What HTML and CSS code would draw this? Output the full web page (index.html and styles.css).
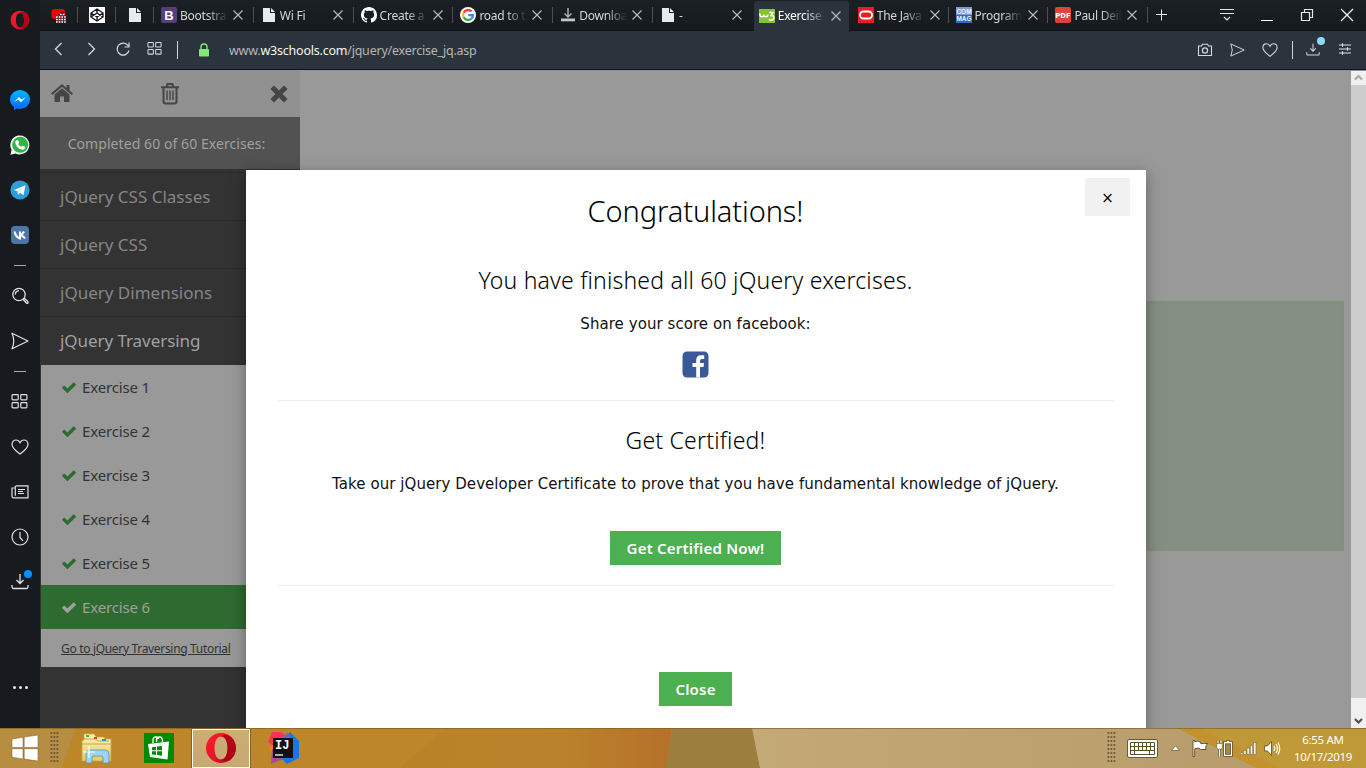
FILE: index.html
```html
<!DOCTYPE html>
<html lang="en">
<head>
<meta charset="utf-8">
<title>Exercise</title>
<link rel="stylesheet" href="styles.css">
</head>
<body>
<svg class="defs" width="0" height="0">
  <defs>
    <linearGradient id="operaRed" x1="0" y1="0" x2="1" y2="1"><stop offset="0" stop-color="#ff1b2d"/><stop offset=".55" stop-color="#e8142a"/><stop offset="1" stop-color="#a70014"/></linearGradient>
    <linearGradient id="msg" x1="0" y1="0" x2="0" y2="1"><stop offset="0" stop-color="#00b8ff"/><stop offset="1" stop-color="#0068ff"/></linearGradient>
    <linearGradient id="folder" x1="0" y1="0" x2="0" y2="1"><stop offset="0" stop-color="#fdf3b4"/><stop offset="1" stop-color="#e6cb62"/></linearGradient>
    <symbol id="x" viewBox="0 0 16 16"><path d="M3.5 3.5l9 9M12.500 3.500l-9 9" fill="none" stroke="#b9bdc0" stroke-width="1.1"/></symbol>
    <symbol id="file" viewBox="0 0 16 16"><path d="M2 1h7v5h5v8.500q0 .5-.5.5h-11q-.5 0-.5-.5zM10 1l4 4h-4z" fill="#e8ebed"/></symbol>
    <symbol id="check" viewBox="0 0 1792 1400"><path d="M1671 366q0 40-28 68l-724 724-136 136q-28 28-68 28t-68-28l-136-136-362-362q-28-28-28-68t28-68l136-136q28-28 68-28t68 28l294 295 656-657q28-28 68-28t68 28l136 136q28 28 28 68z"/></symbol>
    <symbol id="opera" viewBox="0 0 32 32"><path fill-rule="evenodd" d="M16 1a15 15 0 1 0 0 30a15 15 0 1 0 0-30M16 4.500c4.500 0 6.500 5.500 6.500 11.500s-2 11.500-6.500 11.500S9.500 22 9.500 16 11.500 4.500 16 4.500" fill="url(#operaRed)"/><path d="M16 4.500c3-2.500 7-2.300 10 .3 6.500 6 6.500 16.500 0 22.400-3 2.600-7 2.800-10 .3 4.500 0 6.500-5.500 6.500-11.500S20.500 4.500 16 4.500" fill="#a70014" opacity=".75"/></symbol>
    <symbol id="grid4" viewBox="0 0 16 16"><g fill="none" stroke="currentColor" stroke-width="1.1"><rect x="1" y="1.500" width="5.800" height="5" rx=".8"/><rect x="9.200" y="1.500" width="5.800" height="5" rx=".8"/><rect x="1" y="9" width="5.800" height="5" rx=".8"/><rect x="9.200" y="9" width="5.800" height="5" rx=".8"/></g></symbol>
    <symbol id="heart" viewBox="0 0 18 18"><path d="M9 16C6 13.500 1 10.500 1 6.200 1 3.500 3 2 5 2c1.800 0 3.200 1 4 2.700C9.800 3 11.200 2 13 2c2 0 4 1.500 4 4.200C17 10.500 12 13.500 9 16z" fill="none" stroke="currentColor" stroke-width="1.200"/></symbol>
    <symbol id="send" viewBox="0 0 18 18"><path d="M1 1.200L17 9 1 16.800Q4.500 9 1 1.200z" fill="none" stroke="currentColor" stroke-width="1.200" stroke-linejoin="round"/></symbol>
    <symbol id="down" viewBox="0 0 18 18"><path d="M9 1v9M5.500 7L9 10.500 12.500 7M1 12v2q0 1.500 1.500 1.500h13q1.500 0 1.500-1.500v-2" fill="none" stroke="currentColor" stroke-width="1.300"/></symbol>
    <symbol id="grip" viewBox="0 0 9 32"><path d="M.5 1h8M.5 5h8M.5 9h8M.5 13h8M.5 17h8M.5 21h8M.5 25h8M.5 29h8" stroke="#5a4a2c" stroke-width="1.600" stroke-dasharray="1.800 1.200"/></symbol>
  </defs>
</svg>
<div class="screen">
  <div class="upper">
    <nav class="dock">
      <div class="dock-logo"><svg width="20" height="20"><use href="#opera"/></svg></div>
      <div class="dock-cell"><svg width="20" height="20" viewBox="0 0 20 20"><path d="M10 0a10 9.500 0 0 1 0 19q-1.500 0-3-.4L4 20v-3A9.500 9.500 0 0 1 0 9.500 10 9.500 0 0 1 10 0" fill="url(#msg)"/><path d="M4 12l5-5 2.500 2.600L16 7l-5 5.200-2.600-2.500z" fill="#fff"/></svg></div>
      <div class="dock-cell"><svg width="20" height="20" viewBox="0 0 20 20"><path d="M.4 19.700l1.200-5A9.500 9.500 0 1 1 5.500 18.400z" fill="#f3f6f3"/><circle cx="10.200" cy="9.800" r="8" fill="#33b247"/><path d="M6.500 5.200l1.500-.2 1.200 2.600-.9 1.300q1 2 3 2.900l1.200-1.200 2.500 1.200q.1 3-2.700 2.900C8.500 14 5.300 10.300 5.300 7.200q.1-1.300 1.200-2z" fill="#fff"/></svg></div>
      <div class="dock-cell"><svg width="20" height="20" viewBox="0 0 20 20"><circle cx="10" cy="10" r="9.600" fill="#2ba0d8"/><path d="M4 10l11.500-4.700-2 9.900-3.500-2.400-2 1.900-.6-3.400z" fill="#fff"/><path d="M7.500 11.300l5.500-4-4 4.500-.9 2.700z" fill="#b9d9e8"/></svg></div>
      <div class="dock-cell"><svg width="18" height="18" viewBox="0 0 18 18"><rect width="18" height="18" rx="4" fill="#4a76a8"/><path d="M3.500 5.500q1.500 6 5.500 7V5.500v3.700q2.500-.7 4-3.700M9 9.200q3.500.5 5 3.300" fill="none" stroke="#fff" stroke-width="2.100"/></svg></div>
      <i class="dock-rule"></i>
      <div class="dock-cell"><svg width="18" height="18" viewBox="0 0 18 18" fill="none" stroke="currentColor" stroke-width="1.300"><circle cx="8" cy="7.500" r="6.200"/><path d="M8 3.700Q4.500 4 4.300 7.500M11.800 12l3.500 4q1 .8 1.600 0 .5-.8-.2-1.500L13 11"/></svg></div>
      <div class="dock-cell"><svg width="18" height="18"><use href="#send"/></svg></div>
      <i class="dock-rule"></i>
      <div class="dock-cell"><svg width="17" height="17"><use href="#grid4"/></svg></div>
      <div class="dock-cell"><svg width="18" height="18"><use href="#heart"/></svg></div>
      <div class="dock-cell"><svg width="18" height="18" viewBox="0 0 18 18" fill="none" stroke="currentColor" stroke-width="1.200"><path d="M4.500 2.800h12.500v12H2.200Q1 14.800 1 13.600V5h2.500M4.300 3v9.800M7 6.500h7M7 8.500h5M7 10.500h6"/></svg></div>
      <div class="dock-cell"><svg width="18" height="18" viewBox="0 0 18 18" fill="none" stroke="currentColor" stroke-width="1.200"><circle cx="9" cy="9" r="8"/><path d="M9 4v5.500l3 3.300"/></svg></div>
      <div class="dock-cell"><svg width="18" height="18"><use href="#down"/></svg><b class="dot dot-blue"></b></div>
      <div class="dock-more"><i></i><i></i><i></i></div>
    </nav>
    <div class="browser">
      <header class="tabs">
        <div class="tab mini"><svg width="16" height="16" viewBox="0 0 16 16"><rect x=".5" y="2" width="13.500" height="10" rx="3" fill="#f10000"/><path d="M10 5h3v3h2v7H5V9h2V7h3z" fill="#591416"/><path d="M9 7.500h5M5 10h10M5 12.500h10M5 15h10" stroke="#fff" stroke-width="1.600" stroke-dasharray="1.700 1"/></svg></div>
        <div class="tab mini"><svg width="16" height="16" viewBox="0 0 16 16"><rect width="16" height="16" fill="#fff"/><path d="M8 2l6 4v4l-6 4-6-4V6zM2 6l6 4 6-4M2 10l6-4 6 4M8 2v4M8 10v4" fill="none" stroke="#111" stroke-width="1.300"/></svg></div>
        <div class="tab mini"><svg width="16" height="16"><use href="#file"/></svg></div>
        <div class="tab"><svg width="16" height="16" viewBox="0 0 16 16"><rect width="16" height="16" rx="2" fill="#563d7c"/><text x="8" y="12.500" class="ic-b">B</text></svg><span>Bootstra</span><svg class="x" width="16" height="16"><use href="#x"/></svg></div>
        <div class="tab"><svg width="16" height="16"><use href="#file"/></svg><span>Wi Fi</span><svg class="x" width="16" height="16"><use href="#x"/></svg></div>
        <div class="tab"><svg width="16" height="16" viewBox="0 0 16 16"><path fill="#fff" d="M8 0C3.580 0 0 3.580 0 8c0 3.540 2.290 6.530 5.470 7.590.4.070.55-.17.55-.38 0-.19-.01-.82-.01-1.490-2.010.37-2.530-.49-2.690-.94-.09-.23-.48-.94-.82-1.130-.28-.15-.68-.52-.01-.53.63-.01 1.080.58 1.230.82.72 1.210 1.870.87 2.330.66.07-.52.28-.87.51-1.070-1.780-.2-3.640-.89-3.640-3.950 0-.87.31-1.590.82-2.150-.08-.2-.36-1.020.08-2.120 0 0 .67-.21 2.200.82.64-.18 1.320-.27 2-.27s1.360.09 2 .27c1.530-1.040 2.200-.82 2.200-.82.44 1.100.16 1.920.08 2.120.51.56.82 1.270.82 2.150 0 3.070-1.870 3.750-3.650 3.950.29.25.54.73.54 1.480 0 1.070-.01 1.930-.01 2.200 0 .21.15.46.55.38A8.010 8.010 0 0 0 16 8c0-4.420-3.580-8-8-8z"/></svg><span>Create a</span><svg class="x" width="16" height="16"><use href="#x"/></svg></div>
        <div class="tab"><svg width="16" height="16" viewBox="0 0 16 16"><circle cx="8" cy="8" r="8" fill="#fff"/><g fill="none" stroke-width="2.300"><path d="M11.600 4.500A5 5 0 0 0 3.600 5.700" stroke="#ea4335"/><path d="M3.600 5.700a5 5 0 0 0 0 4.600" stroke="#fbbc05"/><path d="M3.600 10.300a5 5 0 0 0 7.600 1.500" stroke="#34a853"/><path d="M11.200 11.800A5 5 0 0 0 13 8.200H8.200" stroke="#4285f4"/></g></svg><span>road to t</span><svg class="x" width="16" height="16"><use href="#x"/></svg></div>
        <div class="tab"><svg width="16" height="16" viewBox="0 0 16 16"><path d="M8 1v9M4.500 6.500L8 10l3.500-3.500" fill="none" stroke="#aeb4b8" stroke-width="1.400"/><rect x="1" y="11.500" width="14" height="2.800" fill="#c3c8cb"/></svg><span>Downloa</span><svg class="x" width="16" height="16"><use href="#x"/></svg></div>
        <div class="tab"><svg width="16" height="16"><use href="#file"/></svg><span>-</span><svg class="x" width="16" height="16"><use href="#x"/></svg></div>
        <div class="tab active"><svg width="16" height="16" viewBox="0 0 16 16"><rect y="1" width="16" height="14" fill="#86c232"/><path d="M.8 5.500Q1 9 3 8.700T5 6.500Q5 9 7 8.700T9 6.500M10 4.500h4L12 7.500q2.800-.2 2.800 2.200 0 2.500-3 2.500-1.200 0-2-.9" fill="none" stroke="#fff" stroke-width="1.500"/></svg><span>Exercise</span><svg class="x" width="16" height="16"><use href="#x"/></svg></div>
        <div class="tab"><svg width="16" height="16" viewBox="0 0 16 16"><rect width="16" height="16" fill="#ec1c24"/><rect x="2" y="4.500" width="12" height="7" rx="3.500" fill="none" stroke="#fff" stroke-width="1.900"/></svg><span>The Java</span><svg class="x" width="16" height="16"><use href="#x"/></svg></div>
        <div class="tab"><svg width="16" height="16" viewBox="0 0 16 16"><rect width="16" height="8" fill="#7d9bd8"/><rect y="8" width="16" height="8" fill="#3668c8"/><text x="8" y="7" class="ic-c">COM</text><text x="8" y="14" class="ic-c">MAG</text></svg><span>Program</span><svg class="x" width="16" height="16"><use href="#x"/></svg></div>
        <div class="tab"><svg width="16" height="16" viewBox="0 0 16 16"><rect width="16" height="16" rx="2" fill="#dc4437"/><text x="8" y="10.600" class="ic-p">PDF</text></svg><span>Paul Deit</span><svg class="x" width="16" height="16"><use href="#x"/></svg></div>
        <svg class="plus" width="12" height="12" viewBox="0 0 12 12"><path d="M5.500 .5v11M0 5.500h11" stroke="#eee" stroke-width="1"/></svg>
        <div class="winctl">
          <svg width="16" height="16" viewBox="0 0 16 16"><path d="M1 2.500h14M1 6.500h14M5 10l3 3 3-3" fill="none" stroke="#e4e6e8" stroke-width="1.200"/></svg>
          <svg width="16" height="16" viewBox="0 0 16 16"><path d="M2 13.500h12" stroke="#fff"/></svg>
          <svg width="16" height="16" viewBox="0 0 16 16"><path d="M2.500 5.500h8v8h-8zM5.500 5V2.500h8v8H11" fill="none" stroke="#e4e6e8" stroke-width="1.200"/></svg>
          <svg width="16" height="16" viewBox="0 0 16 16"><path d="M2 2l12 12M14 2L2 14" stroke="#f4f4f4" stroke-width="1.300"/></svg>
        </div>
      </header>
      <div class="address">
        <div class="navs">
          <svg width="16" height="16" viewBox="0 0 16 16"><path d="M10.500 2l-6 6 6 6" fill="none" stroke="currentColor" stroke-width="1.300"/></svg>
          <svg width="16" height="16" viewBox="0 0 16 16"><path d="M5.500 2l6 6-6 6" fill="none" stroke="currentColor" stroke-width="1.300"/></svg>
          <svg width="16" height="16" viewBox="0 0 16 16"><path d="M13.300 5A6 6 0 1 0 14 9.500M14 1.500V6H9.500" fill="none" stroke="currentColor" stroke-width="1.200"/></svg>
          <svg width="15" height="15"><use href="#grid4"/></svg>
        </div>
        <i class="vline"></i>
        <svg class="lock" width="12" height="14" viewBox="0 0 12 14"><path d="M3 7V4a3 3 0 0 1 6 0v3" fill="none" stroke="#81e87a" stroke-width="1.400"/><rect x="1" y="6" width="10" height="7.500" rx="1" fill="#81e87a"/></svg>
        <p class="url">www.<b>w3schools.com</b>/jquery/exercise_jq.asp</p>
        <div class="tools">
          <svg width="16" height="16" viewBox="0 0 16 16"><path d="M1.500 4h3l1-1.800h5l1 1.800h3v9.500h-13z" fill="none" stroke="currentColor" stroke-width="1.100"/><circle cx="8" cy="8.500" r="2.600" fill="none" stroke="currentColor" stroke-width="1.200"/></svg>
          <svg width="15" height="14" viewBox="0 0 18 18" preserveAspectRatio="none"><use href="#send" width="18" height="18"/></svg>
          <svg width="16" height="16"><use href="#heart"/></svg>
        </div>
        <i class="vline"></i>
        <div class="dl"><svg width="14" height="16"><use href="#down"/></svg><b class="dot dot-sky"></b></div>
        <svg class="sliders" width="14" height="14" viewBox="0 0 14 14"><path d="M1 3h12M1 7h12M1 11h12M4.500 1.200v3.600M9.500 5.200v3.600M4.500 9.200v3.600" stroke="#dfe3e6" stroke-width="1.100"/></svg>
      </div>
      <div class="page">
        <aside class="side">
          <div class="side-tools">
            <svg width="22" height="19" viewBox="0 0 22 19" fill="#454545"><path d="M11 0L0 9.500l1.300 1.400L11 2.700l9.700 8.200L22 9.500l-3.500-3V1h-3v2.900z"/><path d="M11 4.200l-7.500 6.300V18h5.500v-5.500h4V18h5.500v-7.500z"/></svg>
            <svg class="trash" width="18" height="22" viewBox="0 0 18 22" fill="none" stroke="#454545" stroke-width="2"><path d="M0 4.200h18M5.500 4L6.500 1h5l1 3M2.500 4.500v14q0 2 2 2h9q2 0 2-2v-14"/><path d="M6 7.500V17M9 7.500V17M12 7.500V17" stroke-width="1.400"/></svg>
            <svg width="18" height="18" viewBox="0 0 18 18"><path d="M4 4l10 10M14 4l-10 10" stroke="#454545" stroke-width="5" stroke-linecap="square" stroke-linejoin="round"/></svg>
          </div>
          <div class="done">Completed 60 of 60 Exercises:</div>
          <ul class="topics"><li>jQuery CSS Classes</li><li>jQuery CSS</li><li>jQuery Dimensions</li><li class="open">jQuery Traversing</li></ul>
          <ul class="exs">
            <li><svg class="ck"><use href="#check"/></svg>Exercise 1</li>
            <li><svg class="ck"><use href="#check"/></svg>Exercise 2</li>
            <li><svg class="ck"><use href="#check"/></svg>Exercise 3</li>
            <li><svg class="ck"><use href="#check"/></svg>Exercise 4</li>
            <li><svg class="ck"><use href="#check"/></svg>Exercise 5</li>
            <li class="current"><svg class="ck"><use href="#check"/></svg>Exercise 6</li>
          </ul>
          <div class="goto"><a>Go to jQuery Traversing Tutorial</a></div>
        </aside>
        <main class="content"><div class="answer"></div></main>
        <div class="scroll">
          <svg width="15" height="15" viewBox="0 0 15 15"><path d="M4 9.500L7.500 6 11 9.500" fill="none" stroke="#a8a8a8" stroke-width="2.200"/></svg>
          <div class="thumb"></div>
          <svg width="15" height="15" viewBox="0 0 15 15"><path d="M4 6l3.500 3.500L11 6" fill="none" stroke="#505050" stroke-width="2.200"/></svg>
        </div>
        <section class="modal">
          <button class="modal-x">×</button>
          <h2>Congratulations!</h2>
          <h3 class="finished">You have finished all 60 jQuery exercises.</h3>
          <p class="share">Share your score on facebook:</p>
          <svg class="fb" width="27" height="27" viewBox="0 0 27 27"><rect x=".5" y=".5" width="26" height="26" rx="4.500" fill="#3b5998"/><path d="M14.200 26.500V16h-3.700v-4h3.700V9q0-4.700 4.700-4.700h3.300V8h-2.300q-1.900 0-1.900 1.700V12h4l-.5 4H18v10.500z" fill="#fff"/></svg>
          <hr>
          <h3 class="cert">Get Certified!</h3>
          <p class="take">Take our jQuery Developer Certificate to prove that you have fundamental knowledge of jQuery.</p>
          <button class="green wide">Get Certified Now!</button>
          <hr class="second">
          <button class="green close">Close</button>
        </section>
      </div>
    </div>
  </div>
  <footer class="taskbar">
    <svg class="wall" width="1366" height="40" viewBox="0 0 1366 40" preserveAspectRatio="none">
      <defs><linearGradient id="w1"><stop offset="0" stop-color="#b98228"/><stop offset=".6" stop-color="#ba822a"/><stop offset="1" stop-color="#b6702a"/></linearGradient><linearGradient id="w2"><stop offset="0" stop-color="#c3a976"/><stop offset="1" stop-color="#b89d6c"/></linearGradient></defs>
      <rect width="1366" height="40" fill="#bd8629"/><path d="M0 0h76L62 40H0z" fill="#b78d42"/><path d="M445 0h227l-6 40H400z" fill="url(#w1)"/><path d="M672 0h80l8 40h-94z" fill="#9c7f3f"/><path d="M752 0h425l80 40H760z" fill="url(#w2)"/><path d="M1177 0h22l80 40h-22z" fill="#c4922c"/><path d="M1199 0h167v40h-87z" fill="#bf9838"/><path d="M0 .5h1366" stroke="#7d5c20" opacity=".65"/>
    </svg>
    <svg class="start" width="28" height="28" viewBox="0 0 28 28"><path d="M1 5l11-1.700v10.200H1zM13.200 3.100L27 1v12.500H13.200zM1 14.700h11V25L1 23.200zM13.200 14.700H27V27l-13.800-1.900z" fill="#fff" stroke="#7a5b22" stroke-width=".5"/></svg>
    <svg class="grip1" width="9" height="32"><use href="#grip"/></svg>
    <svg class="explorer" width="32" height="32" viewBox="0 0 32 32"><path d="M3 2h10l2 3h8l1 2h6v22H1V9l2-1z" fill="url(#folder)" stroke="#c9a84a" stroke-width=".7"/><path d="M1 12h30M3 7h12l2 2h11" stroke="#c4a655" fill="none"/><rect x="5" y="3" width="3" height="2" fill="#3ac13a"/><rect x="13" y="5" width="3" height="2" fill="#d64b35"/><rect x="21" y="7" width="4" height="2" fill="#2c8ff0"/><path d="M5 31V22q0-4 4-4h15q4 0 4 4v9h-6v-5q0-2-2-2h-7q-2 0-2 2v5z" fill="#9dd5f0" stroke="#4a97bf" stroke-width=".8"/><path d="M8 14v12M2 20h12" stroke="#fff" stroke-width="1.200"/></svg>
    <svg class="store" width="30" height="30" viewBox="0 0 30 30"><rect width="30" height="30" fill="#008a00"/><path d="M9 10V7q0-3 3-3 2 0 2.500 2M12.500 9V7q0-3 3-3 3 0 3 4v1" fill="none" stroke="#fff" stroke-width="1.300"/><path d="M4 11l21-2.500-1.500 18L6 24z" fill="#fff"/><path d="M8 14.200l4-.5v3.600H8zM13 13.500l5-.6v4.400h-5zM8 18.300h4v3.600l-4-.5zM13 18.300h5v4.400l-5-.6z" fill="#008a00"/></svg>
    <div class="task-on"><svg width="32" height="32"><use href="#opera"/></svg></div>
    <svg class="ij" width="32" height="32" viewBox="0 0 32 32"><path d="M4 0h9l6 5-6 14-13-9z" fill="#fe315d"/><path d="M0 15l6-1v9z" fill="#f97a12"/><path d="M4 17l18 7-7 3-12 5z" fill="#a94a9c"/><path d="M18 6l4-6 9 9v17l-12 6-6-6z" fill="#1677e8"/><path d="M14 5l6-4 4 9z" fill="#7b5fc0"/><rect x="5" y="6" width="20" height="20" fill="#111"/><path d="M7 23h8" stroke="#fff" stroke-width="1.300"/><text x="7" y="17" class="ic-ij">IJ</text></svg>
    <div class="tray">
      <svg class="grip2" width="9" height="32"><use href="#grip"/></svg>
      <svg class="kbd" width="31" height="19" viewBox="0 0 31 19"><rect x=".5" y=".5" width="30" height="18" rx="1.500" fill="#fff" stroke="#6e5a30"/><path d="M3.500 3.500h24v12h-24zM3.500 7.500h24M3.500 11.500h24M7.500 3.500v8M11.500 3.500v8M15.500 3.500v8M19.500 3.500v8M23.500 3.500v8M7.500 12v3M22.500 12v3" fill="none" stroke="#5e4d2b"/></svg>
      <svg class="tri" width="9" height="6" viewBox="0 0 9 6"><path d="M.5 5.500L4.500.8l4 4.700z" fill="#fff" stroke="#6e5a30" stroke-width=".7"/></svg>
      <svg class="flag" width="17" height="17" viewBox="0 0 17 17"><path d="M1 .5h1.700v1.200q3-1.400 6 .3v1.500q3-.2 7 0l-2 3 .3 3H8.500L8 8.700q-3-1.200-5.300 0v7.800H1z" fill="#fff" stroke="#5e4920" stroke-width=".9"/></svg>
      <svg class="bat" width="17" height="17" viewBox="0 0 17 17"><path d="M2 .5v3M5 .5v3M3.500 8v8.500" fill="none" stroke="#5e4920" stroke-width="2.600"/><path d="M2 .5v3M5 .5v3M3.500 8v8.500" stroke="#fff" stroke-width="1.300"/><path d="M.7 3.500h5.600v4L4.500 9.200h-2L.7 7.500z" fill="#fff" stroke="#5e4920" stroke-width=".5"/><path d="M7.500 1.500h3V.5h3v1h3v15h-9z" fill="#fff" stroke="#5e4920" stroke-width=".8"/><path d="M9.500 3.800h5v10.500h-5z" fill="#a58a50" stroke="#5e4920" stroke-width=".8"/></svg>
      <svg class="sig" width="17" height="13" viewBox="0 0 17 13"><path d="M.5 10.500h2.200v2H.5zM3.800 8.500H6v4H3.800zM7.100 6h2.200v6.500H7.100zM10.400 3.500h2.200v9h-2.200zM13.700.5h2.200v12h-2.200z" fill="#fff" stroke="#5e4920" stroke-width=".45"/></svg>
      <svg class="spk" width="17" height="15" viewBox="0 0 17 15"><path d="M.5 5h3l4-4.500v14l-4-4.500h-3z" fill="#fff" stroke="#5e4920" stroke-width=".8"/><path d="M10 5q1.500 2.500 0 5M12 3q3 4.500 0 9M14 1.500q3.500 6 0 12" fill="none" stroke="#fff" stroke-width="1.200"/></svg>
      <div class="clock"><span>6:55 AM</span><span>10/17/2019</span></div>
    </div>
  </footer>
</div>
</body>
</html>
```
FILE: styles.css
```css
* { box-sizing: border-box; }
body { margin: 0; overflow: hidden; font-family: "Noto Sans", sans-serif; }
svg { display: block; flex: none; }
.defs { position: absolute; }
ul { list-style: none; margin: 0; padding: 0; }
.screen { width: 1366px; height: 768px; display: flex; flex-direction: column; overflow: hidden; }
.upper { height: 728px; display: flex; }

.dock { width: 40px; background: #171b20; color: #dfe3e6; display: flex; flex-direction: column; align-items: center; }
.dock-logo { height: 40px; margin-bottom: 37px; display: flex; align-items: center; }
.dock-cell { position: relative; width: 40px; height: 45px; padding-right: 1px; display: flex; align-items: center; justify-content: center; }
.dock-rule { width: 12px; height: 1px; margin: 8px 0 7px; background: #a4a9ad; }
.dot { position: absolute; border-radius: 50%; width: 8px; height: 8px; }
.dot-blue { left: 24px; top: 11px; background: #0090ff; }
.dot-sky { left: 11px; top: -5px; background: #8fd8ff; }
.dock-more { display: flex; gap: 3px; margin-top: 82px; }
.dock-more i { width: 3px; height: 3px; border-radius: 50%; background: #e8eaec; }

.browser { flex: 1; min-width: 0; display: flex; flex-direction: column; }
.tabs { height: 31px; background: linear-gradient(#1b2025, #171a1e); display: flex; align-items: flex-start; border-bottom: 1px solid #111418; }
.tab { position: relative; width: 99.8px; height: 30px; padding: 0 0 0 7px; display: flex; align-items: center; font-size: 12px; color: #d3d6d8; }
.tab::after { content: ""; position: absolute; right: 0; top: 7px; width: 1px; height: 16px; background: #4c5054; }
.tab.mini { width: 38px; padding-left: 11px; }
.tab span { width: 49px; margin-left: 3px; white-space: nowrap; letter-spacing: -.25px; -webkit-mask-image: linear-gradient(90deg, #000 55%, transparent 98%); mask-image: linear-gradient(90deg, #000 55%, transparent 98%); }
.tab .x { margin-left: 1px; }
.tab.active { height: 31px; margin-top: 1px; margin-bottom: -1px; margin-left: 1px; width: 95px; padding-left: 5px; padding-bottom: 2px; background: #2b343c; border-radius: 3px 3px 0 0; color: #fff; }
.tab.active::after { display: none; }
.tab:nth-child(9)::after { display: none; }
.tab.active + .tab { padding-left: 9px; }
.plus { margin: 9px 0 0 8px; }
.winctl { margin-left: auto; margin-right: 11px; display: flex; gap: 24px; padding-top: 7px; }
.ic-b { font: 700 13px "Liberation Sans", sans-serif; fill: #fff; text-anchor: middle; }
.ic-c { font: 700 6.500px "Liberation Sans", sans-serif; fill: #f0f3fb; text-anchor: middle; }
.ic-p { font: 700 6.800px "DejaVu Sans", sans-serif; fill: #fff; text-anchor: middle; }
.ic-ij { font: 700 12px "Liberation Mono", monospace; fill: #fff; }

.address { height: 39px; background: #2b343c; border-bottom: 1px solid #111418; display: flex; align-items: center; color: #d5d9dc; }
.navs { display: flex; align-items: center; gap: 16px; padding: 0 0 3px 11px; }
.vline { width: 1px; height: 18px; background: #cfd3d6; margin-left: 15px; }
.lock { margin: 0 19px 0 20px; }
.url { margin: 0; font-size: 12.500px; color: #b2b7bb; letter-spacing: -.22px; }
.url b { font-weight: 400; color: #f4f5f6; }
.tools { margin-left: auto; display: flex; align-items: center; gap: 17px; }
.tools + .vline { margin-left: 14px; }
.dl { position: relative; margin-left: 13px; }
.sliders { margin: 0 14px 3px 18px; }

.page { position: relative; flex: 1; display: flex; overflow: hidden; background: #999; border-top: 1px solid #929292; }
.side { width: 260px; background: #333; color: #999; margin-top: -1px; }
.side-tools { height: 47px; background: #919191; display: flex; justify-content: space-between; align-items: center; padding: 0 12px 0 11px; }
.trash { margin-right: 4px; }
.done { height: 52px; background: #525252; display: flex; align-items: center; justify-content: center; padding-right: 7px; font-size: 14px; letter-spacing: .07px; color: #a0a0a0; }
.topics { height: 196px; padding: 3px 0 0 1px; }
.topics li { height: 48px; padding-left: 19px; line-height: 47px; font-size: 17px; color: #858585; border-top: 1px solid #2b2b2b; }
.topics .open { color: #a0a0a0; letter-spacing: -.06px; }
.exs { margin-left: 1px; background: #999; color: #333; }
.exs li { height: 44px; display: flex; align-items: center; gap: 5px; padding-left: 20px; font-size: 15px; letter-spacing: -.15px; }
.ck { width: 16px; height: 13px; fill: #2e6b31; }
.exs .current { background: #2e6b31; color: #a0a0a0; }
.current .ck { fill: #a0a0a0; }
.goto { height: 38px; margin-left: 1px; background: #999; color: #333; display: flex; align-items: center; padding-left: 20px; font-size: 12px; letter-spacing: -.32px; }
.goto a { text-decoration: underline; white-space: nowrap; }
.content { flex: 1; padding: 230px 7px 0 20px; }
.answer { height: 250px; background: #858f82; border: 1px solid #838f78; }
.scroll { width: 15px; margin-top: -1px; background: #f0f0f0; display: flex; flex-direction: column; }
.thumb { height: 613px; margin-bottom: 15px; background: #cdcdcd; }

.modal { position: absolute; left: 206px; top: 99px; width: 900px; height: 640px; background: #fff; color: #000; padding: 0 33px 0 32px; display: flex; flex-direction: column; align-items: center; box-shadow: 0 4px 10px rgba(0,0,0,.2), 0 4px 20px rgba(0,0,0,.19); }
.modal-x { position: absolute; right: 16px; top: 8px; width: 45px; height: 38px; border: 0; padding: 2px 0 0; background: #f1f1f1; font: 15px "DejaVu Sans", sans-serif; }
.modal h2, .modal h3, .modal p { margin: 0; font-weight: 400; white-space: nowrap; }
.modal h2 { font-size: 29px; line-height: 40px; margin-top: 21px; letter-spacing: -.1px; }
.modal h3 { font-size: 23px; line-height: 36px; letter-spacing: .2px; }
.modal h2, .modal h3 { font-weight: 300; }
.modal .finished { margin-top: 31px; }
.modal p { font: 15px/22px "DejaVu Sans", sans-serif; letter-spacing: .06px; color: #111; }
.modal .share { margin-top: 15px; }
.fb { margin-top: 16px; }
.modal hr { align-self: flex-start; flex: none; width: 836px; height: 1px; border: 0; margin: 22px 0 0; background: #eee; }
.modal .cert { margin-top: 21px; }
.modal .take { margin-top: 15px; }
.green { border: 0; height: 34px; background: #4caf50; color: #fff; font: 600 15px "Noto Sans", sans-serif; padding: 0; }
.wide { width: 171px; margin-top: 36px; letter-spacing: .2px; }
.modal hr.second { margin-top: 20px; }
.close { width: 73px; margin-top: 86px; letter-spacing: .2px; }

.taskbar { position: relative; height: 40px; display: flex; align-items: center; }
.taskbar > * { position: relative; }
.taskbar .wall { position: absolute; left: 0; top: 0; }
.start { margin-left: 11px; }
.grip1 { margin-left: 11px; }
.explorer { margin-left: 22px; }
.store { margin-left: 31px; }
.task-on { width: 58px; height: 39px; margin-left: 18px; background: linear-gradient(#cdad72, #c7a873); border: 1px solid #fff; outline: 1px solid #84622a; display: flex; align-items: center; justify-content: center; }
.ij { margin-left: 18px; }
.tray { margin-left: auto; display: flex; align-items: center; }
.kbd { margin-left: 11px; }
.tri { margin-left: 13px; }
.flag { margin-left: 12px; }
.bat { margin-left: 7px; }
.sig { margin-left: 7px; }
.spk { margin-left: 7px; }
.clock { width: 85px; display: flex; flex-direction: column; align-items: center; padding-right: 1px; color: #fff; font-size: 11.500px; line-height: 17px; letter-spacing: -.3px; }
```
